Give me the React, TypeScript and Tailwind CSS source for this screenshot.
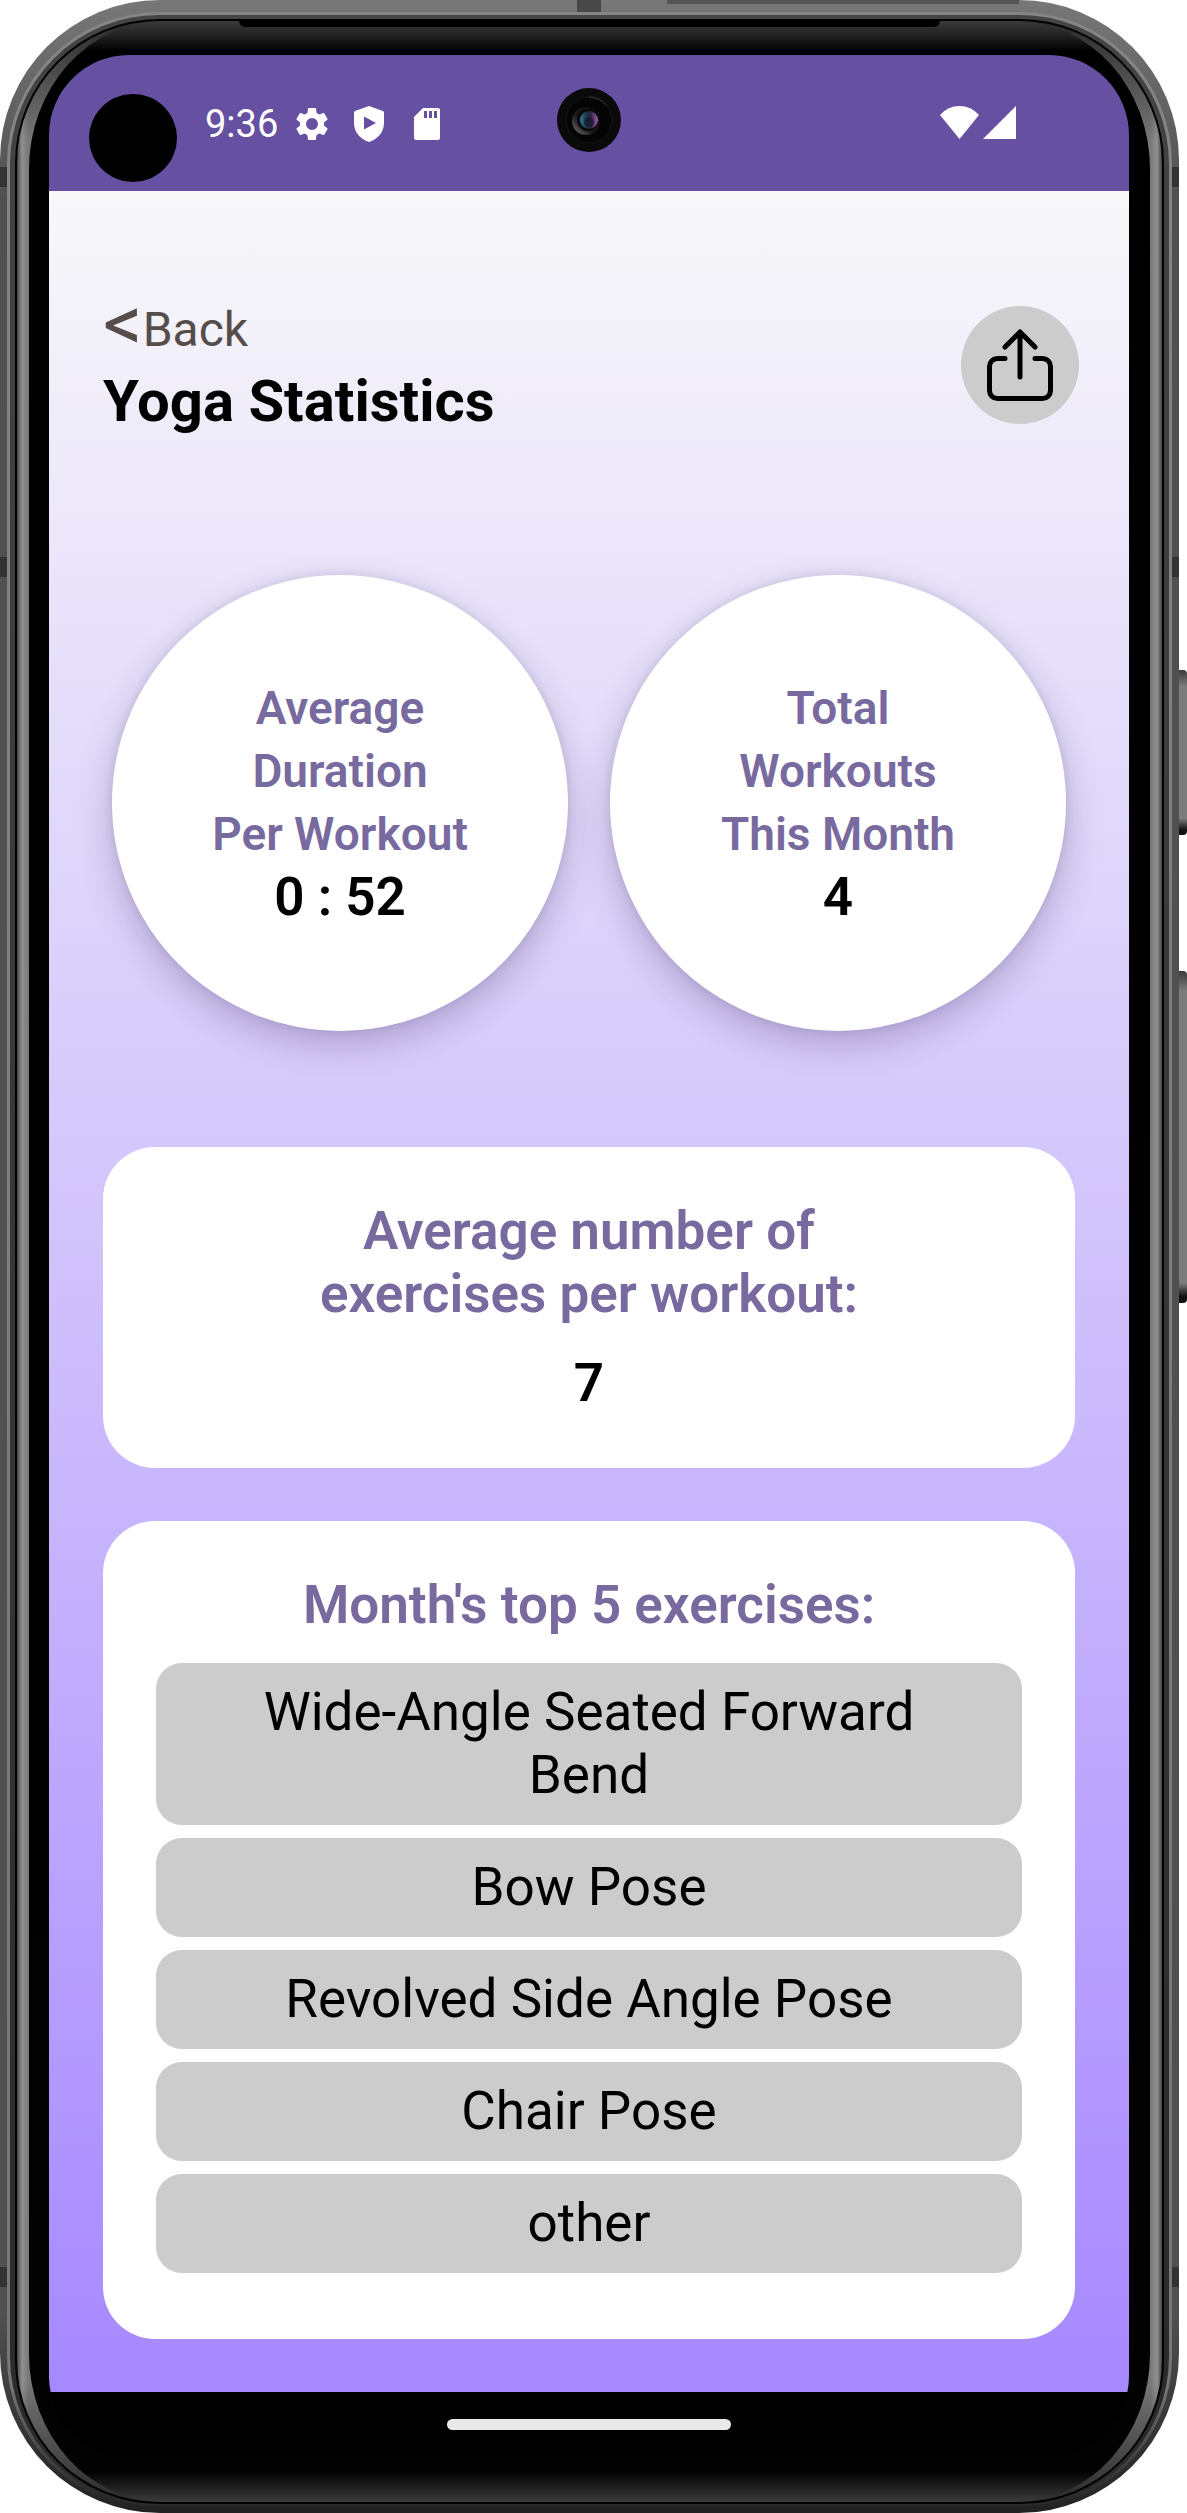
import { type ReactNode } from "react";

const exercises = [
  "Wide-Angle Seated Forward Bend",
  "Bow Pose",
  "Revolved Side Angle Pose",
  "Chair Pose",
  "other",
];

function Camera() {
  return (
    <svg viewBox="0 0 64 64" className="size-16" aria-hidden="true">
      <defs>
        <linearGradient id="rim" x1="0" y1="1" x2="1" y2="0">
          <stop offset="0" stopColor="#777" />
          <stop offset="0.4" stopColor="#1a1a1a" />
          <stop offset="1" stopColor="#0c0c0c" />
        </linearGradient>
        <linearGradient id="glass">
          <stop offset="0" stopColor="#2f7f9a" />
          <stop offset="0.35" stopColor="#1b3348" />
          <stop offset="0.6" stopColor="#2c2340" />
          <stop offset="1" stopColor="#9a62a8" />
        </linearGradient>
      </defs>
      <circle cx="32" cy="32" r="32" fill="#0a0a0a" />
      <circle cx="32" cy="32" r="23" fill="#040404" stroke="#161616" />
      <path d="M32 9a23 23 0 0 1 18 9" stroke="#3a3a3a" fill="none" />
      <circle cx="29" cy="33" r="14" fill="url(#rim)" />
      <circle cx="31" cy="32" r="11" fill="#08080c" />
      <circle cx="32" cy="32" r="9" fill="url(#glass)" />
      <circle cx="32" cy="34" r="5" fill="#141828" opacity="0.7" />
    </svg>
  );
}

function StatusBar() {
  return (
    <div className="relative flex h-[136px] shrink-0 items-start justify-between bg-[#6650a2] pr-[113px] pl-10">
      <div className="absolute top-[33px] left-1/2 -translate-x-1/2">
        <Camera />
      </div>
      <div className="flex items-start">
        <div className="mt-[39px] size-[88px] rounded-full bg-black" />
        <div className="mt-[45px] ml-7 flex h-12 items-center text-white">
          <span className="text-[38px]">9:36</span>
          <svg viewBox="0 0 24 24" className="ml-[14px] size-10" fill="currentColor" aria-hidden="true">
            <path d="M19.14 12.94c.04-.3.06-.61.06-.94s-.02-.64-.07-.94l2.03-1.58a.49.49 0 0 0 .12-.61l-1.92-3.32a.49.49 0 0 0-.59-.22l-2.39.96a7 7 0 0 0-1.62-.94l-.36-2.54A.48.48 0 0 0 13.92 2.4h-3.84a.48.48 0 0 0-.47.41l-.36 2.54a7.4 7.4 0 0 0-1.62.94l-2.39-.96a.48.48 0 0 0-.59.22L2.74 8.87a.48.48 0 0 0 .12.61l2.03 1.58c-.05.3-.09.63-.09.94s.02.64.07.94l-2.03 1.58a.49.49 0 0 0-.12.61l1.92 3.32c.12.22.37.29.59.22l2.39-.96c.5.38 1.03.7 1.62.94l.36 2.54c.05.24.24.41.48.41h3.84c.24 0 .44-.17.47-.41l.36-2.54a7 7 0 0 0 1.62-.94l2.39.96c.22.08.47 0 .59-.22l1.92-3.32a.48.48 0 0 0-.12-.61zM12 15.6a3.6 3.6 0 1 1 0-7.2 3.6 3.6 0 0 1 0 7.2z" />
          </svg>
          <svg viewBox="0 0 30 36" className="ml-[22px] h-9 w-[30px]" aria-hidden="true">
            <path d="M15 0 29 5q1 .5 1 2v10c0 9-6 16-15 19C6 33 0 26 0 17V7q0-1.500 1-2z" fill="currentColor" />
            <path d="M10 10.500v13L22 17z" fill="#6650a2" />
          </svg>
          <svg viewBox="0 0 26 32" className="ml-[30px] h-8 w-[26px]" aria-hidden="true">
            <path d="M9 0h15q2 0 2 2v28q0 2-2 2H2q-2 0-2-2V9z" fill="currentColor" />
            <path d="M10 3h3v7h-3zM15 3h3v7h-3zM20 3h3v7h-3z" fill="#6650a2" />
          </svg>
        </div>
      </div>
      <div className="mt-[51px] flex gap-1 text-white">
        <svg viewBox="0 0 39 33" className="h-[33px] w-[39px]" fill="currentColor" aria-hidden="true">
          <path d="M19.500 33 0 9Q8 0 19.500 0T39 9z" />
        </svg>
        <svg viewBox="0 0 33 33" className="size-[33px]" fill="currentColor" aria-hidden="true">
          <path d="M33 0v33H0z" />
        </svg>
      </div>
    </div>
  );
}

function StatCircle({ lines, value }: { lines: string[]; value: string }) {
  return (
    <div className="flex aspect-square flex-1 flex-col items-center justify-center rounded-full bg-white text-center shadow-[0_14px_36px_rgba(40,20,70,0.24),0_0_10px_rgba(40,20,70,0.1)]">
      {lines.map((line) => (
        <span key={line} className="text-[46px] leading-[63px] font-semibold text-[#786a9f]">
          {line}
        </span>
      ))}
      <strong className="text-[53px] leading-[63px] font-semibold">{value}</strong>
    </div>
  );
}

function Card({ title, children }: { title: string; children: ReactNode }) {
  return (
    <section className="flex flex-col items-center rounded-[52px] bg-white px-[53px] pt-[53px] text-center">
      <h2 className="max-w-[640px] text-[53px] leading-[63px] font-semibold text-[#786a9f]">{title}</h2>
      {children}
    </section>
  );
}

function ShareIcon() {
  return (
    <svg
      viewBox="0 0 66 72"
      className="h-[72px] w-[66px]"
      fill="none"
      stroke="black"
      strokeWidth="5"
      strokeLinecap="round"
      strokeLinejoin="round"
      aria-hidden="true"
    >
      <path d="M33 48V3M18 18 33 3l15 15M18 29.500h-7.500a8 8 0 0 0-8 8v24a8 8 0 0 0 8 8h45a8 8 0 0 0 8-8v-24a8 8 0 0 0-8-8H48" />
    </svg>
  );
}

export default function App() {
  return (
    <div className="relative bg-white pr-2 font-['Roboto',sans-serif] text-black">
      {/* side keys */}
      <div className="absolute top-[670px] right-0 h-[165px] w-2 rounded-r-sm bg-[linear-gradient(to_bottom,#3a3a3a,#7c7c7c_10%,#7c7c7c_90%,#111_97%)]" />
      <div className="absolute top-[971px] right-0 h-[332px] w-2 rounded-r-sm bg-[linear-gradient(to_bottom,#3a3a3a,#7c7c7c_6%,#7c7c7c_94%,#111_98%)]" />

      {/* metal shell */}
      <div className="relative overflow-hidden rounded-[160px] bg-[linear-gradient(to_bottom,#777,#505050_8%,#505050_92%,#222)] p-[7px] pt-3 pb-1">
        <div className="absolute top-0 right-[160px] h-1 w-[352px] bg-[#555]" />
        {/* antenna seams */}
        <div className="absolute top-0 left-[577px] size-6 bg-[#484848]" />
        <div className="absolute inset-x-0 top-[167px] h-5 bg-[#333]" />
        <div className="absolute inset-x-0 top-[557px] h-5 bg-[#333]" />
        <div className="absolute inset-x-0 bottom-[226px] h-5 bg-[#333]" />
        <div className="relative rounded-[152px] bg-linear-to-b from-[#858585] via-[#777] via-95% to-[#222] p-[3px]">
          <div className="rounded-[149px] bg-linear-to-b from-[#444] to-[#2a2a2a] px-[5px] pt-1 pb-0.5">
            <div className="rounded-[144px] bg-black p-0.5">
              <div className="rounded-[142px] bg-[linear-gradient(to_bottom,#2a2a2a_0,transparent_120px,transparent_calc(100%-120px),#2a2a2a_100%),linear-gradient(to_right,#444_0,#909090_5px,#777_12px,#777_calc(100%-12px),#909090_calc(100%-5px),#444_100%)] px-3">
                <div className="relative rounded-[134px/148px] bg-[linear-gradient(to_bottom,#3a3a3a_0,#222_14px,#000_30px,#020202_calc(100%-30px),#3c3c3c_100%)] pt-[34px] pr-[21px] pb-[46px] pl-5">
                  {/* earpiece slit */}
                  <div className="absolute inset-x-[210px] top-0 h-1.5 rounded-b-full bg-black" />
                  <main className="flex flex-col overflow-hidden rounded-[80px] bg-black">
                    <StatusBar />
                    <div className="flex flex-col bg-linear-to-b/srgb from-[#f8f8f9] to-[#a688ff] px-[54px] pb-[53px]">
                      <header className="-mr-1 flex items-start justify-between pt-[108px]">
                        <div>
                          <button type="button" className="flex h-[62px] items-center text-[48px] text-[#564c4a]">
                            <span className="pb-3 text-[78px] leading-none">&lt;</span>
                            <span>Back</span>
                          </button>
                          <h1 className="pt-1 text-[58px] leading-[72px] font-bold">Yoga Statistics</h1>
                        </div>
                        <button
                          type="button"
                          aria-label="Share"
                          className="mt-[7px] flex size-[118px] items-center justify-center rounded-full bg-[#ccc]"
                        >
                          <ShareIcon />
                        </button>
                      </header>
                      <div className="flex gap-[42px] px-[9px] pt-[138px]">
                        <StatCircle lines={["Average", "Duration", "Per Workout"]} value="0 : 52" />
                        <StatCircle lines={["Total", "Workouts", "This Month"]} value="4" />
                      </div>
                      <div className="flex flex-col gap-[53px] pt-[116px]">
                        <Card title="Average number of exercises per workout:">
                          <strong className="pt-[26px] pb-[53px] text-[53px] leading-[63px] font-semibold">7</strong>
                        </Card>
                        <Card title="Month's top 5 exercises:">
                          <ul className="flex w-full flex-col gap-[13px] pt-[26px] pb-[66px]">
                            {exercises.map((name) => (
                              <li
                                key={name}
                                className="rounded-[26px] bg-[#ccc] px-[72px] py-[18px] text-[53px] leading-[63px]"
                              >
                                {name}
                              </li>
                            ))}
                          </ul>
                        </Card>
                      </div>
                    </div>
                    <div className="flex h-16 items-center justify-center">
                      <div className="h-[11px] w-[284px] rounded-full bg-[#e9e9e9]" />
                    </div>
                  </main>
                </div>
              </div>
            </div>
          </div>
        </div>
      </div>
    </div>
  );
}
